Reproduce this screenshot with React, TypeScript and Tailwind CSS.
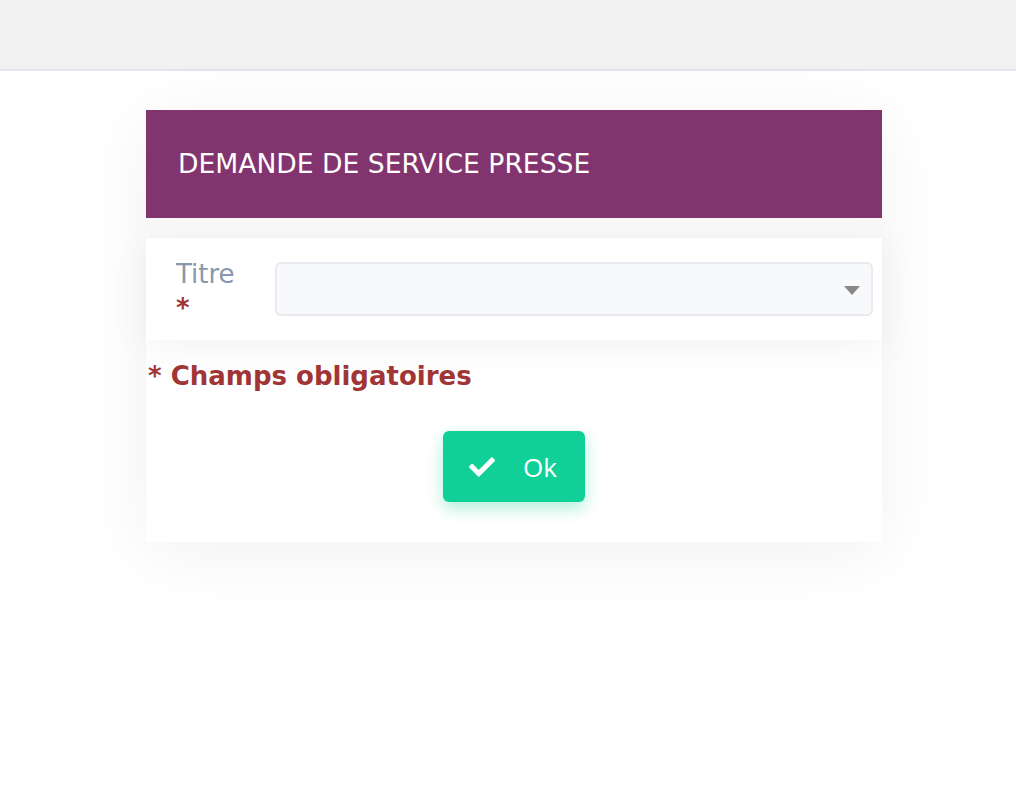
import React from "react";

export default function App() {
  return (
    <div className="min-h-[794px] w-full bg-white" style={{ fontFamily: '"DejaVu Sans", Verdana, sans-serif' }}>
      <div className="h-[71px] bg-[#f1f1f2] border-b-2 border-[#e4e3ef]" />
      <div className="flex justify-center pl-[12px] pt-[39px]">
        <div className="w-[736px] bg-white shadow-[0_10px_70px_rgba(0,0,0,0.06)] pb-[40px]">
          <div className="h-[108px] bg-[#82346e] flex items-center px-8">
            <span className="text-white text-[26.6px] leading-none">DEMANDE DE SERVICE PRESSE</span>
          </div>
          <div className="pt-[20px] bg-[#f8f8f9]">
            <div className="h-[102px] bg-white flex items-start pl-[30px] pr-[9px] pt-[24px] shadow-[0_8px_40px_rgba(0,0,0,0.05)]">
              <label className="w-[99px] h-[54px] shrink-0 -mt-[5px] text-[26px] leading-[34px] text-[#8797ad]">
                Titre
                <span className="block text-[#a13535] font-bold">*</span>
              </label>
              <div className="relative flex-1 h-[54px] rounded-[6px] border-2 border-[#e8eaef] bg-[#f8f9fb]">
                <svg className="absolute right-[11px] top-[22px]" width="16" height="9" viewBox="0 0 16 9">
                  <path d="M0 0 H16 L8 9 Z" fill="#888888" />
                </svg>
              </div>
            </div>
          </div>
          <div className="mt-[19px] px-[2px] text-[26px] leading-[34px] font-bold text-[#a13535]">
            * Champs obligatoires
          </div>
          <div className="flex justify-center mt-[38px]">
            <button
              className="h-[71px] w-[142px] rounded-[6px] bg-[#10d097] flex items-center pl-[26px] gap-[28px] text-white shadow-[0_6px_16px_rgba(16,208,151,0.35)]"
              style={{ fontFamily: '"Open Sans", sans-serif' }}
            >
              <svg width="26" height="20" viewBox="0 65 512 382" fill="white">
                <path d="M173.898 439.404l-166.4-166.4c-9.997-9.997-9.997-26.206 0-36.204l36.203-36.204c9.997-9.998 26.207-9.998 36.204 0L192 312.69 432.095 72.596c9.997-9.997 26.207-9.997 36.204 0l36.203 36.204c9.997 9.997 9.997 26.206 0 36.204l-294.4 294.401c-9.998 9.997-26.207 9.997-36.204-.001z" />
              </svg>
              <span className="text-[26px] leading-none">Ok</span>
            </button>
          </div>
        </div>
      </div>
    </div>
  );
}
